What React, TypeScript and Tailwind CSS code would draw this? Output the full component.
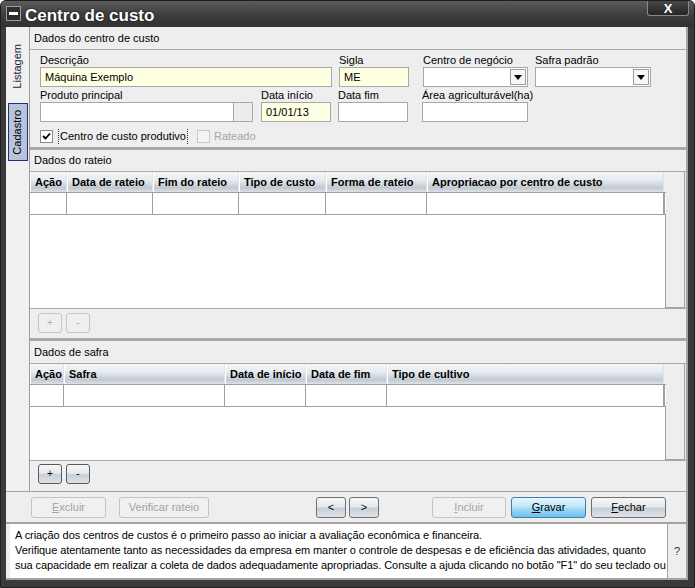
import React from "react";

const label = "h-[14px] leading-[14px] text-[11px] text-black whitespace-nowrap";

const Field = ({
  title,
  width,
  value,
  yellow = false,
  className = "",
}: {
  title: string;
  width: string;
  value?: string;
  yellow?: boolean;
  className?: string;
}) => (
  <div className={`flex flex-col ${className}`}>
    <span className={label}>{title}</span>
    <div
      className={`${width} h-[20px] border border-[#a7a7a7] px-[4px] text-[11px] leading-[18px] text-black ${
        yellow ? "bg-[#ffffe1]" : "bg-white"
      }`}
    >
      {value}
    </div>
  </div>
);

const Select = ({ title, width, className = "" }: { title: string; width: string; className?: string }) => (
  <div className={`flex flex-col ${className}`}>
    <span className={label}>{title}</span>
    <div className={`${width} h-[20px] border border-[#a7a7a7] bg-white flex justify-end items-center pr-[1px]`}>
      <div className="w-[16px] h-[16px] border border-[#9d9d9d] bg-[#f6f6f6] flex items-center justify-center">
        <svg width="8" height="5" viewBox="0 0 8 5">
          <path d="M0 0h8L4 5z" fill="#000" />
        </svg>
      </div>
    </div>
  </div>
);

type BtnProps = {
  children: React.ReactNode;
  width: string;
  kind?: "normal" | "disabled" | "primary";
  className?: string;
};

const Btn = ({ children, width, kind = "normal", className = "" }: BtnProps) => {
  const styles = {
    normal:
      "border-[#707070] text-black bg-[linear-gradient(to_bottom,#f6f6f6_0%,#e6e9ec_45%,#c7d0d8_55%,#dfe4e8_100%)]",
    disabled: "border-[#c4c4c4] text-[#a3a3a3] bg-[#f0f0f0]",
    primary:
      "border-[#3c7fb1] text-black bg-[linear-gradient(to_bottom,#eaf6fd_0%,#bee6fd_45%,#a7d9f5_55%,#6cc0ee_100%)]",
  }[kind];
  return (
    <div
      className={`${width} h-[21px] rounded-[3px] border flex items-center justify-center text-[11px] ${styles} ${className}`}
    >
      {children}
    </div>
  );
};

const SmallBtn = ({ children, disabled = false }: { children: React.ReactNode; disabled?: boolean }) => (
  <div
    className={`w-[24px] h-[20px] rounded-[3px] border flex items-center justify-center text-[10px] leading-none ${
      disabled
        ? "border-[#c4c4c4] text-[#b0b0b0] bg-[#efefef]"
        : "border-[#5a5a5a] text-black bg-[linear-gradient(to_bottom,#f6f6f6_0%,#e6e9ec_45%,#c7d0d8_55%,#dfe4e8_100%)]"
    }`}
  >
    {children}
  </div>
);

const SectionHeader = ({ children, height }: { children: React.ReactNode; height: string }) => (
  <div className={`${height} flex items-center pl-[4px] text-[11px] text-black border-b border-[#a9a9a9]`}>
    {children}
  </div>
);

const Grid = ({ columns, height }: { columns: { name: string; w: string }[]; height: string }) => (
  <div className={`${height} flex border-b border-[#a9a9a9]`}>
    <div className="w-[636px] bg-white flex flex-col">
      <div className="h-[21px] flex border-b border-[#a0a0a0] bg-[#eeeeee]">
        {columns.map((c) => (
          <div
            key={c.name}
            className={`${c.w} h-full flex items-center pl-[4px] border-r border-[#dfe3e7] border-l border-l-white text-[11px] font-bold text-black whitespace-nowrap overflow-hidden bg-[linear-gradient(to_bottom,#f4f6f8_0%,#e7ebee_40%,#c0c9d1_80%,#dde2e6_100%)]`}
          >
            {c.name}
          </div>
        ))}
      </div>
      <div className="h-[22px] flex border-b border-[#a0a0a0]">
        {columns.map((c) => (
          <div key={c.name} className={`${c.w} h-full border-r border-[#a0a0a0]`} />
        ))}
        <div className="w-[1px] h-full border-r border-[#a0a0a0]" />
      </div>
      <div className="flex-1 border-r border-[#a0a0a0]" />
    </div>
    <div className="w-[19px] bg-[#eeeeee] border-r border-[#a0a0a0] border-b border-b-[#a0a0a0]" />
  </div>
);

const Check = ({ checked, disabled = false }: { checked: boolean; disabled?: boolean }) => (
  <div
    className={`w-[13px] h-[13px] border flex items-center justify-center ${
      disabled ? "border-[#c7c7c7] bg-[#f4f4f4]" : "border-[#8a8a8a] bg-white"
    }`}
  >
    {checked && (
      <svg width="9" height="8" viewBox="0 0 9 8">
        <path d="M1 4l2.5 2.5L8 1.5" stroke="#000" strokeWidth="1.8" fill="none" />
      </svg>
    )}
  </div>
);

export default function App() {
  return (
    <div className="w-[695px] h-[588px] flex flex-col bg-[#3a3a3a] font-['Liberation_Sans',Arial,sans-serif] overflow-hidden border border-[#1e1e1e] rounded-t-[6px]">
      {/* title bar */}
      <div className="h-[26px] flex items-start bg-[linear-gradient(to_bottom,#5c5c5c_0%,#3f3f3f_50%,#303030_100%)]">
        <div className="mt-[5px] ml-[5px] w-[15px] h-[15px] border border-[#9c9c9c] bg-[#2e2e2e] flex items-center justify-center">
          <div className="w-[9px] h-[3px] bg-white" />
        </div>
        <span className="ml-[4px] mt-[2px] text-[17px] font-bold text-white [text-shadow:0_0_2px_#000]">
          Centro de custo
        </span>
        <div className="flex-1" />
        <div className="mr-[5px] w-[42px] h-[15px] border border-[#8a8a8a] border-t-0 rounded-b-[3px] bg-[linear-gradient(to_bottom,#474747,#262626)] flex items-center justify-center">
          <span className="text-[13px] font-bold text-white leading-none">X</span>
        </div>
      </div>

      {/* body */}
      <div className="ml-[5px] mr-[6px] h-[553px] bg-[#eeeeee] flex flex-col">
        <div className="h-[464px] flex">
          {/* tabs */}
          <div className="w-[23px] flex flex-col items-center pt-[6px] bg-[#f0f0f0]">
            <div className="h-[66px] w-[19px] flex items-center justify-center">
              <span className="[writing-mode:vertical-rl] rotate-180 text-[11px] text-[#1c1c40]">Listagem</span>
            </div>
            <div className="mt-[4px] h-[58px] w-[20px] border border-[#1f2f7a] bg-[#b9c3dc] flex items-center justify-center">
              <span className="[writing-mode:vertical-rl] rotate-180 text-[11px] text-black">Cadastro</span>
            </div>
          </div>

          {/* main column */}
          <div className="flex-1 flex flex-col border-l border-[#9c9c9c] border-r-2 border-r-[#a3a3a3] pt-[1px]">
            <SectionHeader height="h-[22px]">Dados do centro de custo</SectionHeader>

            <div className="h-[100px] pl-[10px] pt-[3px] flex flex-col border-b-[3px] border-[#a9a9a9]">
              <div className="flex">
                <Field title="Descrição" width="w-[292px]" value="Máquina Exemplo" yellow />
                <Field title="Sigla" width="w-[70px]" value="ME" yellow className="ml-[7px]" />
                <Select title="Centro de negócio" width="w-[105px]" className="ml-[14px]" />
                <Select title="Safra padrão" width="w-[116px]" className="ml-[7px]" />
              </div>
              <div className="flex mt-[1px]">
                <div className="flex flex-col">
                  <span className={label}>Produto principal</span>
                  <div className="flex">
                    <div className="w-[194px] h-[20px] border border-[#a7a7a7] bg-white" />
                    <div className="w-[20px] h-[20px] border border-[#a7a7a7] bg-[#ececec] ml-[-1px]" />
                  </div>
                </div>
                <Field title="Data início" width="w-[70px]" value="01/01/13" yellow className="ml-[8px]" />
                <Field title="Data fim" width="w-[70px]" className="ml-[7px]" />
                <Field title="Área agriculturável(ha)" width="w-[106px]" className="ml-[14px]" />
              </div>
              <div className="flex items-center mt-[6px]">
                <Check checked />
                <span className="ml-[5px] px-[1px] text-[11px] text-black border-x border-dotted border-[#333] leading-[15px]">
                  Centro de custo produtivo
                </span>
                <div className="ml-[9px]">
                  <Check checked={false} disabled />
                </div>
                <span className="ml-[4px] text-[11px] text-[#a5a5a5]">Rateado</span>
              </div>
            </div>

            <SectionHeader height="h-[22px]">Dados do rateio</SectionHeader>
            <Grid
              height="h-[137px]"
              columns={[
                { name: "Ação", w: "w-[37px]" },
                { name: "Data de rateio", w: "w-[86px]" },
                { name: "Fim do rateio", w: "w-[86px]" },
                { name: "Tipo de custo", w: "w-[87px]" },
                { name: "Forma de rateio", w: "w-[101px]" },
                { name: "Apropriacao por centro de custo", w: "w-[237px]" },
              ]}
            />
            <div className="h-[32px] flex gap-[4px] pl-[8px] pt-[4px] border-b-[3px] border-[#a9a9a9]">
              <SmallBtn disabled>+</SmallBtn>
              <SmallBtn disabled>-</SmallBtn>
            </div>

            <SectionHeader height="h-[23px]">Dados de safra</SectionHeader>
            <Grid
              height="h-[97px]"
              columns={[
                { name: "Ação", w: "w-[34px]" },
                { name: "Safra", w: "w-[161px]" },
                { name: "Data de início", w: "w-[81px]" },
                { name: "Data de fim", w: "w-[81px]" },
                { name: "Tipo de cultivo", w: "w-[277px]" },
              ]}
            />
            <div className="flex-1 flex gap-[4px] pl-[8px] pt-[3px]">
              <SmallBtn>+</SmallBtn>
              <SmallBtn>-</SmallBtn>
            </div>
          </div>
        </div>

        {/* bottom buttons */}
        <div className="h-[33px] flex items-start pt-[5px] pl-[25px] border-t border-[#a3a3a3] border-b-2 border-b-[#a3a3a3] border-r-2 border-r-[#a3a3a3]">
          <Btn width="w-[75px]" kind="disabled">
            <span className="underline">E</span>xcluir
          </Btn>
          <Btn width="w-[90px]" kind="disabled" className="ml-[13px]">
            Verificar rateio
          </Btn>
          <Btn width="w-[30px]" className="ml-[107px]">
            &lt;
          </Btn>
          <Btn width="w-[30px]" className="ml-[3px]">
            &gt;
          </Btn>
          <Btn width="w-[74px]" kind="disabled" className="ml-[53px]">
            <span className="underline">I</span>ncluir
          </Btn>
          <Btn width="w-[75px]" kind="primary" className="ml-[5px]">
            <span className="underline">G</span>ravar
          </Btn>
          <Btn width="w-[75px]" className="ml-[5px]">
            <span className="underline">F</span>echar
          </Btn>
        </div>

        {/* help */}
        <div className="flex-1 flex pl-[4px] border-b-2 border-[#a3a3a3] border-r-2 border-r-[#a3a3a3]">
          <div className="w-[657px] bg-white pl-[5px] pt-[4px] text-[11px] leading-[15px] tracking-[-0.07px] text-black whitespace-nowrap overflow-hidden">
            <div>A criação dos centros de custos é o primeiro passo ao iniciar a avaliação econômica e financeira.</div>
            <div>
              Verifique atentamente tanto as necessidades da empresa em manter o controle de despesas e de eficiência das
              atividades, quanto
            </div>
            <div>
              sua capacidade em realizar a coleta de dados adequadamente apropriadas. Consulte a ajuda clicando no botão
              "F1" do seu teclado ou
            </div>
          </div>
          <div className="flex-1 border-l border-[#a3a3a3] flex items-center justify-center text-[11px] text-[#333]">?</div>
        </div>
      </div>
    </div>
  );
}
